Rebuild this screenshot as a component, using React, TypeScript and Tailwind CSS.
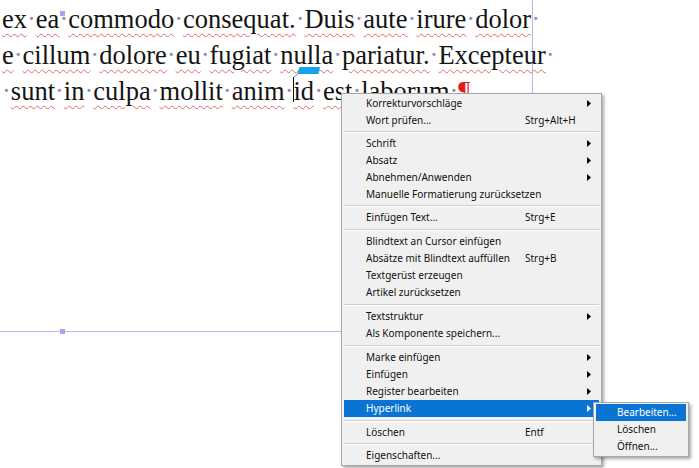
import React from "react"

type Item =
    | { type: "sep"; h?: 6 | 7 }
    | { type: "item"; label: string; shortcut?: string; sub?: boolean; active?: boolean }

const menu: Item[] = [
    { type: "item", label: "Korrekturvorschläge", sub: true },
    { type: "item", label: "Wort prüfen...", shortcut: "Strg+Alt+H" },
    { type: "sep", h: 6 },
    { type: "item", label: "Schrift", sub: true },
    { type: "item", label: "Absatz", sub: true },
    { type: "item", label: "Abnehmen/Anwenden", sub: true },
    { type: "item", label: "Manuelle Formatierung zurücksetzen" },
    { type: "sep", h: 6 },
    { type: "item", label: "Einfügen Text...", shortcut: "Strg+E" },
    { type: "sep", h: 7 },
    { type: "item", label: "Blindtext an Cursor einfügen" },
    { type: "item", label: "Absätze mit Blindtext auffüllen", shortcut: "Strg+B" },
    { type: "item", label: "Textgerüst erzeugen" },
    { type: "item", label: "Artikel zurücksetzen" },
    { type: "sep", h: 7 },
    { type: "item", label: "Textstruktur", sub: true },
    { type: "item", label: "Als Komponente speichern..." },
    { type: "sep", h: 7 },
    { type: "item", label: "Marke einfügen", sub: true },
    { type: "item", label: "Einfügen", sub: true },
    { type: "item", label: "Register bearbeiten", sub: true },
    { type: "item", label: "Hyperlink", sub: true, active: true },
    { type: "sep", h: 7 },
    { type: "item", label: "Löschen", shortcut: "Entf" },
    { type: "sep", h: 6 },
    { type: "item", label: "Eigenschaften..." },
]

const lines: { lead?: boolean; words: string[]; tail?: boolean; pilcrow?: boolean }[] = [
    { words: ["ex", "ea", "commodo", "consequat.", "Duis", "aute", "irure", "dolor"], tail: true },
    { words: ["e", "cillum", "dolore", "eu", "fugiat", "nulla", "pariatur.", "Excepteur"], tail: true },
    { lead: true, words: ["sunt", "in", "culpa", "mollit", "anim", "|id", "est", "laborum"], pilcrow: true },
]

const Dot = () => <span className="text-[#8c8cc4]">·</span>

// text cursor with the blue note flag
const Caret = () => (
    <span className="relative inline-block w-0 h-0">
        <svg className="absolute left-[-2px] bottom-[-3px]" width="32" height="38" viewBox="0 0 32 38">
            <path d="M1.5 12V37" stroke="#111" strokeWidth="1" />
            <path d="M2 12L6.5 8.5" stroke="#1a9fe0" strokeWidth="1" />
            <path d="M7.5 2H28L26.5 9H5.5Z" fill="#14a3ea" />
        </svg>
    </span>
)

const Arrow = ({ white }: { white?: boolean }) => (
    <svg width="4" height="7" viewBox="0 0 4 7">
        <path d="M0 0L4 3.5L0 7Z" fill={white ? "#fff" : "#000"} />
    </svg>
)

export default function App() {
    return (
        <div className="relative w-[699px] h-[468px] overflow-hidden bg-white">
            {/* text frame */}
            <div className="w-[533px] h-[332px] border-r border-b border-[#b8b8f0] pt-[1px] font-['Liberation_Serif',serif] text-[26.5px] leading-[36px] text-[#141414]">
                {lines.map((line, i) => (
                    <div key={i} className="whitespace-nowrap pl-[2px]">
                        {line.lead && <Dot />}
                        {line.words.map((w, j) => (
                            <React.Fragment key={j}>
                                {j > 0 && <Dot />}
                                {w.startsWith("|") && <Caret />}
                                <span className="underline decoration-wavy decoration-[#e06a6a] decoration-1 underline-offset-[5px]">
                                    {w.replace("|", "")}
                                </span>
                            </React.Fragment>
                        ))}
                        {line.tail && <Dot />}
                        {line.pilcrow && (
                            <>
                                <Dot />
                                <span className="text-[#e01b1b]">¶</span>
                            </>
                        )}
                    </div>
                ))}
            </div>

            {/* frame handles */}
            <div className="absolute left-[60px] top-[11px] w-[5px] h-[5px] bg-[#a4a4ec]" />
            <div className="absolute left-[60px] top-[329px] w-[5px] h-[5px] bg-[#a4a4ec]" />

            {/* context menu */}
            <div className="absolute left-[341px] top-[93px] w-[261px] border border-[#a7a7a7] bg-[#f0f0f0] px-[2px] py-[1px] shadow-[2px_2px_3px_rgba(0,0,0,0.35)] font-['Noto_Sans',sans-serif] text-[10px] text-[#111]">
                {menu.map((m, i) =>
                    m.type === "sep" ? (
                        <div
                            key={i}
                            className={`${m.h === 6 ? "mt-[2px] mb-[2px]" : "mt-[3px] mb-[2px]"} border-t border-[#cdcdcd] border-b border-b-white`}
                        />
                    ) : (
                        <div
                            key={i}
                            className={`flex items-center h-[17px] leading-[17px] pl-[22px] pr-[8px] ${m.active ? "bg-[#0a74d4] text-white" : ""}`}
                        >
                            <span className="w-[159px] whitespace-nowrap">{m.label}</span>
                            <span className="flex-1 whitespace-nowrap">{m.shortcut}</span>
                            {m.sub && <Arrow white={m.active} />}
                        </div>
                    )
                )}
            </div>

            {/* submenu */}
            <div className="absolute left-[593px] top-[402px] w-[96px] border border-[#a7a7a7] bg-[#f0f0f0] px-[2px] py-[1px] shadow-[2px_2px_3px_rgba(0,0,0,0.35)] font-['Noto_Sans',sans-serif] text-[10px] text-[#111]">
                {["Bearbeiten...", "Löschen", "Öffnen..."].map((s, i) => (
                    <div
                        key={s}
                        className={`h-[17px] leading-[17px] pl-[21px] whitespace-nowrap ${i === 0 ? "bg-[#0a74d4] text-white" : ""}`}
                    >
                        {s}
                    </div>
                ))}
            </div>
        </div>
    )
}
